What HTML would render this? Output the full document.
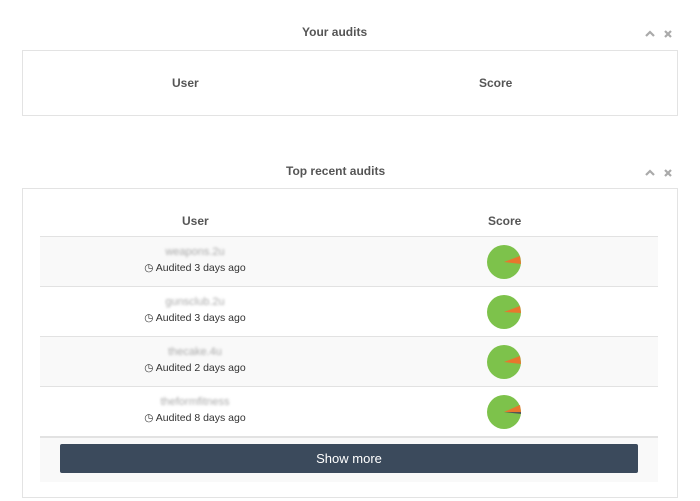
<!DOCTYPE html>
<html><head><style>
body{margin:0;width:700px;height:501px;background:#fff;font-family:"Liberation Sans",sans-serif;color:#555;position:relative;overflow:hidden}
.t{position:absolute;font-size:12px;font-weight:bold;color:#555}
.box{position:absolute;left:22px;width:654px;border:1px solid #e3e3e3;background:#fff}
.row{position:absolute;left:40px;width:618px;height:49px;border-top:1px solid #e2e2e2}
.name{position:absolute;left:0;width:310px;text-align:center;top:9px;font-size:11px;color:#aaa;filter:blur(1.2px)}
.aud{position:absolute;left:0;width:310px;text-align:center;top:25px;font-size:10.5px;color:#333}
.pie{position:absolute;left:447px;top:8px}
.ico{position:absolute}
</style></head><body>
<div class="t" style="left:302px;top:25px">Your audits</div>
<svg class="ico" style="left:644px;top:28px" width="30" height="10"><path d="M2 8L6 4L10 8" stroke="#aaa" stroke-width="2.2" fill="none"/><path d="M21 3L27 9M27 3L21 9" stroke="#aaa" stroke-width="2.2"/></svg>
<div class="box" style="top:50px;height:64px"></div>
<div class="t" style="left:172px;top:76px">User</div>
<div class="t" style="left:479px;top:76px">Score</div>

<div class="t" style="left:286px;top:164px">Top recent audits</div>
<svg class="ico" style="left:644px;top:167px" width="30" height="10"><path d="M2 8L6 4L10 8" stroke="#aaa" stroke-width="2.2" fill="none"/><path d="M21 3L27 9M27 3L21 9" stroke="#aaa" stroke-width="2.2"/></svg>
<div class="box" style="top:188px;height:308px"></div>
<div class="t" style="left:182px;top:214px">User</div>
<div class="t" style="left:488px;top:214px">Score</div>

<div class="row" style="top:236px;background:#f9f9f9"><div class="name">weapons.2u</div><div class="aud">&#9719; Audited 3 days ago</div>
<svg class="pie" width="36" height="36"><circle cx="17" cy="17" r="17" fill="#7dc24b"/><path d="M17 17L33 11L34 19Z" fill="#e8762d"/></svg></div>
<div class="row" style="top:286px;background:#fff"><div class="name">gunsclub.2u</div><div class="aud">&#9719; Audited 3 days ago</div>
<svg class="pie" width="36" height="36"><circle cx="17" cy="17" r="17" fill="#7dc24b"/><path d="M17 17L33 11L34 18Z" fill="#e8762d"/></svg></div>
<div class="row" style="top:336px;background:#f9f9f9"><div class="name">thecake.4u</div><div class="aud">&#9719; Audited 2 days ago</div>
<svg class="pie" width="36" height="36"><circle cx="17" cy="17" r="17" fill="#7dc24b"/><path d="M17 17L33 11L34 19Z" fill="#e8762d"/></svg></div>
<div class="row" style="top:386px;background:#fff"><div class="name">theformfitness</div><div class="aud">&#9719; Audited 8 days ago</div>
<svg class="pie" width="36" height="36"><circle cx="17" cy="17" r="17" fill="#7dc24b"/><path d="M17 17L33 10L34 17Z" fill="#e8762d"/><path d="M17 17L34 17L34 19Z" fill="#555"/></svg></div>
<div class="row" style="top:436px;height:44px;background:#f9f9f9;border-top:2px solid #e2e2e2"></div>
<div style="position:absolute;left:60px;top:444px;width:578px;height:29px;background:#3b4a5c;border-radius:2px;color:#fff;font-size:13px;text-align:center;line-height:29px">Show more</div>
</body></html>
